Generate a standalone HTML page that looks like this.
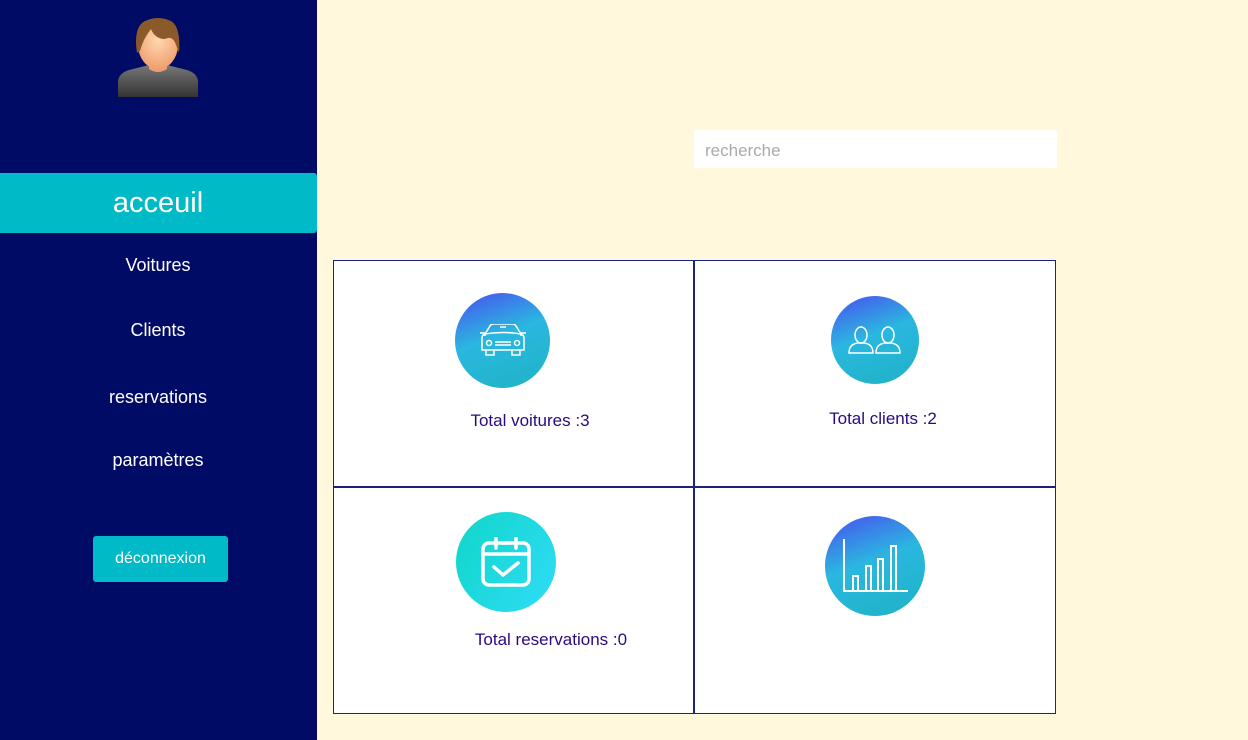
<!DOCTYPE html>
<html><head><meta charset="utf-8"><style>
*{margin:0;padding:0;box-sizing:border-box}
body{width:1248px;height:740px;background:#fff8dc;font-family:"Liberation Sans",sans-serif;position:relative;overflow:hidden}
.side{position:absolute;left:0;top:0;width:317px;height:740px;background:#000b66}
.t{position:absolute;color:#fff;white-space:nowrap;transform:translateX(-50%)}
.act{position:absolute;left:0;top:173px;width:317px;height:60px;background:#00bac8;border-radius:0 3px 3px 0}
.btn{position:absolute;left:93px;top:536px;width:135px;height:46px;background:#00bac8;border-radius:3px;color:#fff;font-size:16px;text-align:center;line-height:46px}
.search{position:absolute;left:694px;top:130px;width:363px;height:38px;background:#fff;border-radius:2px;color:#aaa;font-size:17px;padding:11px 11px}
.grid{position:absolute;left:333px;top:260px;width:723px;height:454px;background:#fff;border:1.5px solid #1a237e}
.vl{position:absolute;left:693px;top:260px;width:2px;height:454px;background:#1a237e}
.hl{position:absolute;left:333px;top:486px;width:723px;height:2px;background:#1a237e}
.c{position:absolute;border-radius:50%;display:flex;align-items:center;justify-content:center}
.g1{background:linear-gradient(160deg,#4a4ef0 0%,#2ab7e0 45%,#1eb3c4 100%)}
.g2{background:linear-gradient(120deg,#10d6c8,#30dcf8)}
.lab{position:absolute;color:#2a0a80;font-size:17px;white-space:nowrap;transform:translateX(-50%)}
</style></head><body>
<div class="side">
<svg style="position:absolute;left:115px;top:15px" width="86" height="82" viewBox="0 0 86 82">
<defs><linearGradient id="sh" x1="0" y1="0" x2="0" y2="1"><stop offset="0" stop-color="#777"/><stop offset="1" stop-color="#333"/></linearGradient>
<radialGradient id="fc" cx=".5" cy=".4" r=".6"><stop offset="0" stop-color="#ffd8b0"/><stop offset="1" stop-color="#f0a070"/></radialGradient></defs>
<path d="M3 82 L3 66 Q4 58 14 55 L34 50 L52 50 L72 55 Q82 58 83 66 L83 82Z" fill="url(#sh)"/>
<path d="M34 44 L34 54 Q43 60 52 54 L52 44Z" fill="#e8a070"/>
<ellipse cx="43" cy="30" rx="20" ry="24" fill="url(#fc)"/>
<path d="M22 38 Q18 12 30 6 Q43 0 56 6 Q66 12 64 38 L61 30 Q58 20 50 24 Q40 24 36 14 Q28 24 25 36Z" fill="#8a5a2a"/>
</svg>
<div class="act"></div>
<div class="t" style="left:158px;top:187px;font-size:29px">acceuil</div>
<div class="t" style="left:158px;top:255px;font-size:18px">Voitures</div>
<div class="t" style="left:158px;top:320px;font-size:18px">Clients</div>
<div class="t" style="left:158px;top:387px;font-size:18px">reservations</div>
<div class="t" style="left:158px;top:450px;font-size:18px">paramètres</div>
<div class="btn">déconnexion</div>
</div>
<div class="search">recherche</div>
<div class="grid"></div><div class="vl"></div><div class="hl"></div>
<div class="c g1" style="left:455px;top:293px;width:95px;height:95px">
<svg width="50" height="34" viewBox="0 0 50 34" fill="none" stroke="#fff" stroke-width="1.5"><path d="M7 10 L12 2 Q13 0 16 0 L34 0 Q37 0 38 2 L43 10 Q46 11 46 14 L46 26 L4 26 L4 14 Q4 11 7 10Z"/><path d="M7 10 Q25 7 43 10"/><circle cx="11" cy="19" r="2.5"/><circle cx="39" cy="19" r="2.5"/><path d="M17 18h16M17 21h16M8 26v5h8v-5M34 26v5h8v-5M2 9h5v3M48 9h-5v3M22 3h6"/></svg></div>
<div class="c g1" style="left:831px;top:296px;width:88px;height:88px">
<svg width="54" height="28" viewBox="0 0 54 28" fill="none" stroke="#fff" stroke-width="1.5"><ellipse cx="13" cy="9" rx="6" ry="8"/><path d="M1 27 Q1 18 10 17 L16 17 Q25 18 25 27Z"/><ellipse cx="40" cy="9" rx="6" ry="8"/><path d="M28 27 Q28 18 37 17 L43 17 Q52 18 52 27Z"/></svg></div>
<div class="c g2" style="left:456px;top:512px;width:100px;height:100px">
<svg width="52" height="50" viewBox="0 0 52 50" fill="none" stroke="#fff" stroke-width="3.5" stroke-linecap="round"><rect x="3" y="6" width="46" height="42" rx="6"/><path d="M3 17h46M16 1v10M36 1v10M22 6h8M14 30l9 8l15-12"/></svg></div>
<div class="c g1" style="left:825px;top:516px;width:100px;height:100px">
<svg width="66" height="54" viewBox="0 0 66 54" fill="none" stroke="#fff" stroke-width="2"><path d="M2 0v52h64"/><rect x="11" y="37" width="5" height="15"/><rect x="24" y="27" width="5" height="25"/><rect x="36" y="20" width="5" height="32"/><rect x="49" y="7" width="5" height="45"/></svg></div>
<div class="lab" style="left:530px;top:411px">Total voitures :3</div>
<div class="lab" style="left:883px;top:409px">Total clients :2</div>
<div class="lab" style="left:551px;top:630px">Total reservations :0</div>
</body></html>
